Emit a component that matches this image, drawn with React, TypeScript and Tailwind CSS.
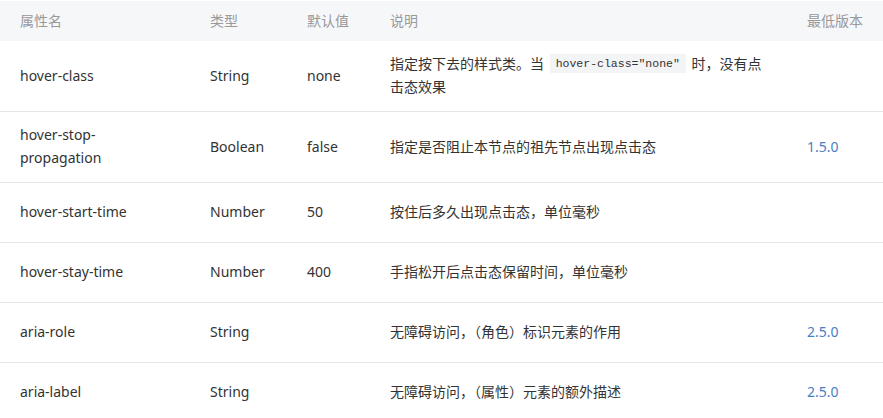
import React from "react";

type Row = {
  name: React.ReactNode;
  type: string;
  def: string;
  desc: React.ReactNode;
  ver: string;
  h: string;
};

const rows: Row[] = [
  {
    name: "hover-class",
    type: "String",
    def: "none",
    desc: (
      <>
        指定按下去的样式类。当{" "}
        <code className="mx-[2px] inline-block bg-[#f3f4f5] px-[6px] align-top leading-[19px] mt-[2px] font-['Liberation_Mono','DejaVu_Sans_Mono',monospace] text-[11.5px] text-[#333]">
          hover-class="none"
        </code>{" "}
        时，没有点击态效果
      </>
    ),
    ver: "",
    h: "h-[70px]",
  },
  {
    name: (
      <>
        hover-stop-
        <br />
        propagation
      </>
    ),
    type: "Boolean",
    def: "false",
    desc: "指定是否阻止本节点的祖先节点出现点击态",
    ver: "1.5.0",
    h: "h-[71px]",
  },
  { name: "hover-start-time", type: "Number", def: "50", desc: "按住后多久出现点击态，单位毫秒", ver: "", h: "h-[60px]" },
  { name: "hover-stay-time", type: "Number", def: "400", desc: "手指松开后点击态保留时间，单位毫秒", ver: "", h: "h-[60px]" },
  { name: "aria-role", type: "String", def: "", desc: "无障碍访问，（角色）标识元素的作用", ver: "2.5.0", h: "h-[60px]" },
  { name: "aria-label", type: "String", def: "", desc: "无障碍访问，（属性）元素的额外描述", ver: "2.5.0", h: "h-[60px]" },
];

const cols = "grid grid-cols-[190px_97px_83px_417px_96px]";

export default function App() {
  return (
    <div className="h-[418px] w-[883px] overflow-hidden bg-white font-['Noto_Sans','Noto_Sans_CJK_SC',sans-serif] text-[14px] text-[#333]">
      <div className={`${cols} mt-px h-[40px] items-center bg-[#f6f7f9] pb-[2px] text-[#999]`}>
        <div className="pl-5">属性名</div>
        <div className="pl-5">类型</div>
        <div className="pl-5">默认值</div>
        <div className="pl-5">说明</div>
        <div className="pl-5">最低版本</div>
      </div>
      {rows.map((r, i) => (
        <div
          key={i}
          className={`${cols} ${r.h} items-center pb-[2px] leading-[23px] ${i > 0 ? "border-t border-[#e6e6e6]" : ""}`}
        >
          <div className="px-5">{r.name}</div>
          <div className="px-5">{r.type}</div>
          <div className="px-5">{r.def}</div>
          <div className="px-5">{r.desc}</div>
          <div className="px-5 text-[#4a7ec4]">{r.ver}</div>
        </div>
      ))}
    </div>
  );
}
